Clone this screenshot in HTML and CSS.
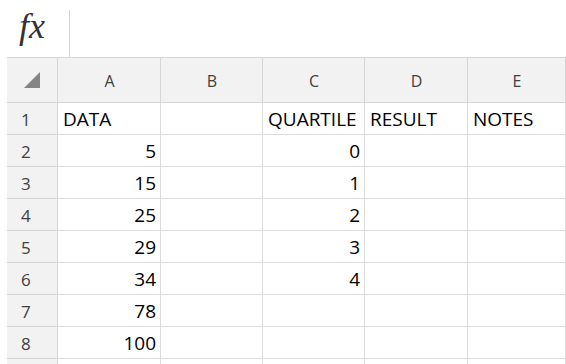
FILE: index.html
```html
<!DOCTYPE html>
<html>
<head>
<meta charset="utf-8">
<link rel="stylesheet" href="styles.css">
</head>
<body>
<div class="formula-bar">
  <div class="fx-box"><span class="fx">fx</span></div>
  <div class="formula-input"></div>
</div>
<div class="sheet">
  <div class="cell corner"><svg width="16" height="16" viewBox="0 0 16 16"><polygon points="16,0 16,16 0,16" fill="#858585"/></svg></div>
  <div class="cell colhead">A</div>
  <div class="cell colhead">B</div>
  <div class="cell colhead">C</div>
  <div class="cell colhead">D</div>
  <div class="cell colhead">E</div>

  <div class="cell rowhead">1</div>
  <div class="cell">DATA</div>
  <div class="cell"></div>
  <div class="cell">QUARTILE</div>
  <div class="cell">RESULT</div>
  <div class="cell">NOTES</div>

  <div class="cell rowhead">2</div>
  <div class="cell num">5</div>
  <div class="cell"></div>
  <div class="cell num">0</div>
  <div class="cell"></div>
  <div class="cell"></div>

  <div class="cell rowhead">3</div>
  <div class="cell num">15</div>
  <div class="cell"></div>
  <div class="cell num">1</div>
  <div class="cell"></div>
  <div class="cell"></div>

  <div class="cell rowhead">4</div>
  <div class="cell num">25</div>
  <div class="cell"></div>
  <div class="cell num">2</div>
  <div class="cell"></div>
  <div class="cell"></div>

  <div class="cell rowhead">5</div>
  <div class="cell num">29</div>
  <div class="cell"></div>
  <div class="cell num">3</div>
  <div class="cell"></div>
  <div class="cell"></div>

  <div class="cell rowhead">6</div>
  <div class="cell num">34</div>
  <div class="cell"></div>
  <div class="cell num">4</div>
  <div class="cell"></div>
  <div class="cell"></div>

  <div class="cell rowhead">7</div>
  <div class="cell num">78</div>
  <div class="cell"></div>
  <div class="cell"></div>
  <div class="cell"></div>
  <div class="cell"></div>

  <div class="cell rowhead">8</div>
  <div class="cell num">100</div>
  <div class="cell"></div>
  <div class="cell"></div>
  <div class="cell"></div>
  <div class="cell"></div>

  <div class="cell rowhead"></div>
  <div class="cell"></div>
  <div class="cell"></div>
  <div class="cell"></div>
  <div class="cell"></div>
  <div class="cell"></div>
</div>
</body>
</html>
```

FILE: styles.css
```css
html, body {
  margin: 0;
  padding: 0;
  background: #ffffff;
  overflow: hidden;
}
body {
  width: 566px;
  height: 364px;
  font-family: "Open Sans", "Noto Sans", sans-serif;
  color: #000;
}
.formula-bar {
  display: flex;
  height: 57px;
  padding-left: 7px;
}
.fx-box {
  width: 62px;
  margin-top: 10px;
  border-right: 1px solid #d6d6d6;
  display: flex;
  justify-content: flex-start;
}
.fx {
  font-family: "Liberation Serif", "DejaVu Serif", serif;
  font-style: italic;
  font-size: 36px;
  line-height: 36px;
  color: #333;
  margin-left: 12px;
  margin-top: -2px;
}
.formula-input {
  flex: 1;
}
.sheet {
  margin-left: 7px;
  display: grid;
  grid-template-columns: 51px 103px 102px 102px 103px 1fr;
  grid-template-rows: 45px repeat(8, 32px) 6px;
  border-top: 1px solid #d6d6d6;
}
.cell {
  border-right: 1px solid #dcdcdc;
  border-bottom: 1px solid #dcdcdc;
  font-size: 19px;
  display: flex;
  align-items: center;
  padding: 1px 4px 0 5px;
  white-space: nowrap;
  overflow: hidden;
  line-height: 1;
}
.num {
  justify-content: flex-end;
}
.colhead, .corner {
  background: #f2f2f2;
  justify-content: center;
  font-size: 16px;
  color: #404040;
  border-color: #d6d6d6;
}
.corner {
  padding: 0;
}
.rowhead {
  background: #f2f2f2;
  color: #404040;
  font-size: 17px;
  padding-left: 14px;
  border-color: #d6d6d6;
}
.colhead:last-child {
  border-right: none;
}
```
